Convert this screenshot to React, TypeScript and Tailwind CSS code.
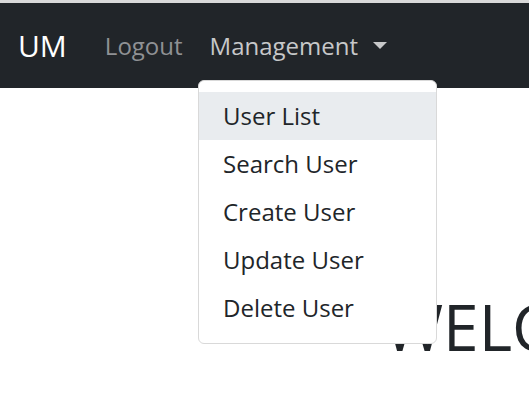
const items = ['User List', 'Search User', 'Create User', 'Update User', 'Delete User'];

export default function App() {
  return (
    <div
      className="relative w-[529px] h-[400px] overflow-hidden bg-white text-[#212529]"
      style={{ fontFamily: '"Open Sans", "Noto Sans", sans-serif' }}
    >
      <div className="h-[3px] bg-[#d9d9d9]" />
      <nav className="h-[85px] bg-[#212529] flex items-center pl-[18px]">
        <span className="text-[30px] leading-none text-white mr-[38px]">UM</span>
        <a className="text-[24px] leading-none text-[#8f9194] mr-[27px]">Logout</a>
        <a className="flex items-center text-[24px] leading-none text-[#c7c8c9]">
          Management
          <span className="ml-[15px] w-0 h-0 border-x-[7px] border-x-transparent border-t-[7px] border-t-[#c7c8c9]" />
        </a>
      </nav>

      <main className="pl-[384px] pt-[201px]">
        <h1 className="whitespace-nowrap text-[64px] font-normal leading-[1.2]">WELCOME</h1>
      </main>

      <ul className="absolute left-[198px] top-[80px] w-[239px] bg-white border border-[#d9d9d9] rounded-[6px] py-[11px]">
        {items.map((t, i) => (
          <li
            key={t}
            className={`px-[24px] py-[6px] text-[24px] leading-[36px] whitespace-nowrap ${i === 0 ? 'bg-[#e9ecef]' : ''}`}
          >
            {t}
          </li>
        ))}
      </ul>
    </div>
  );
}
